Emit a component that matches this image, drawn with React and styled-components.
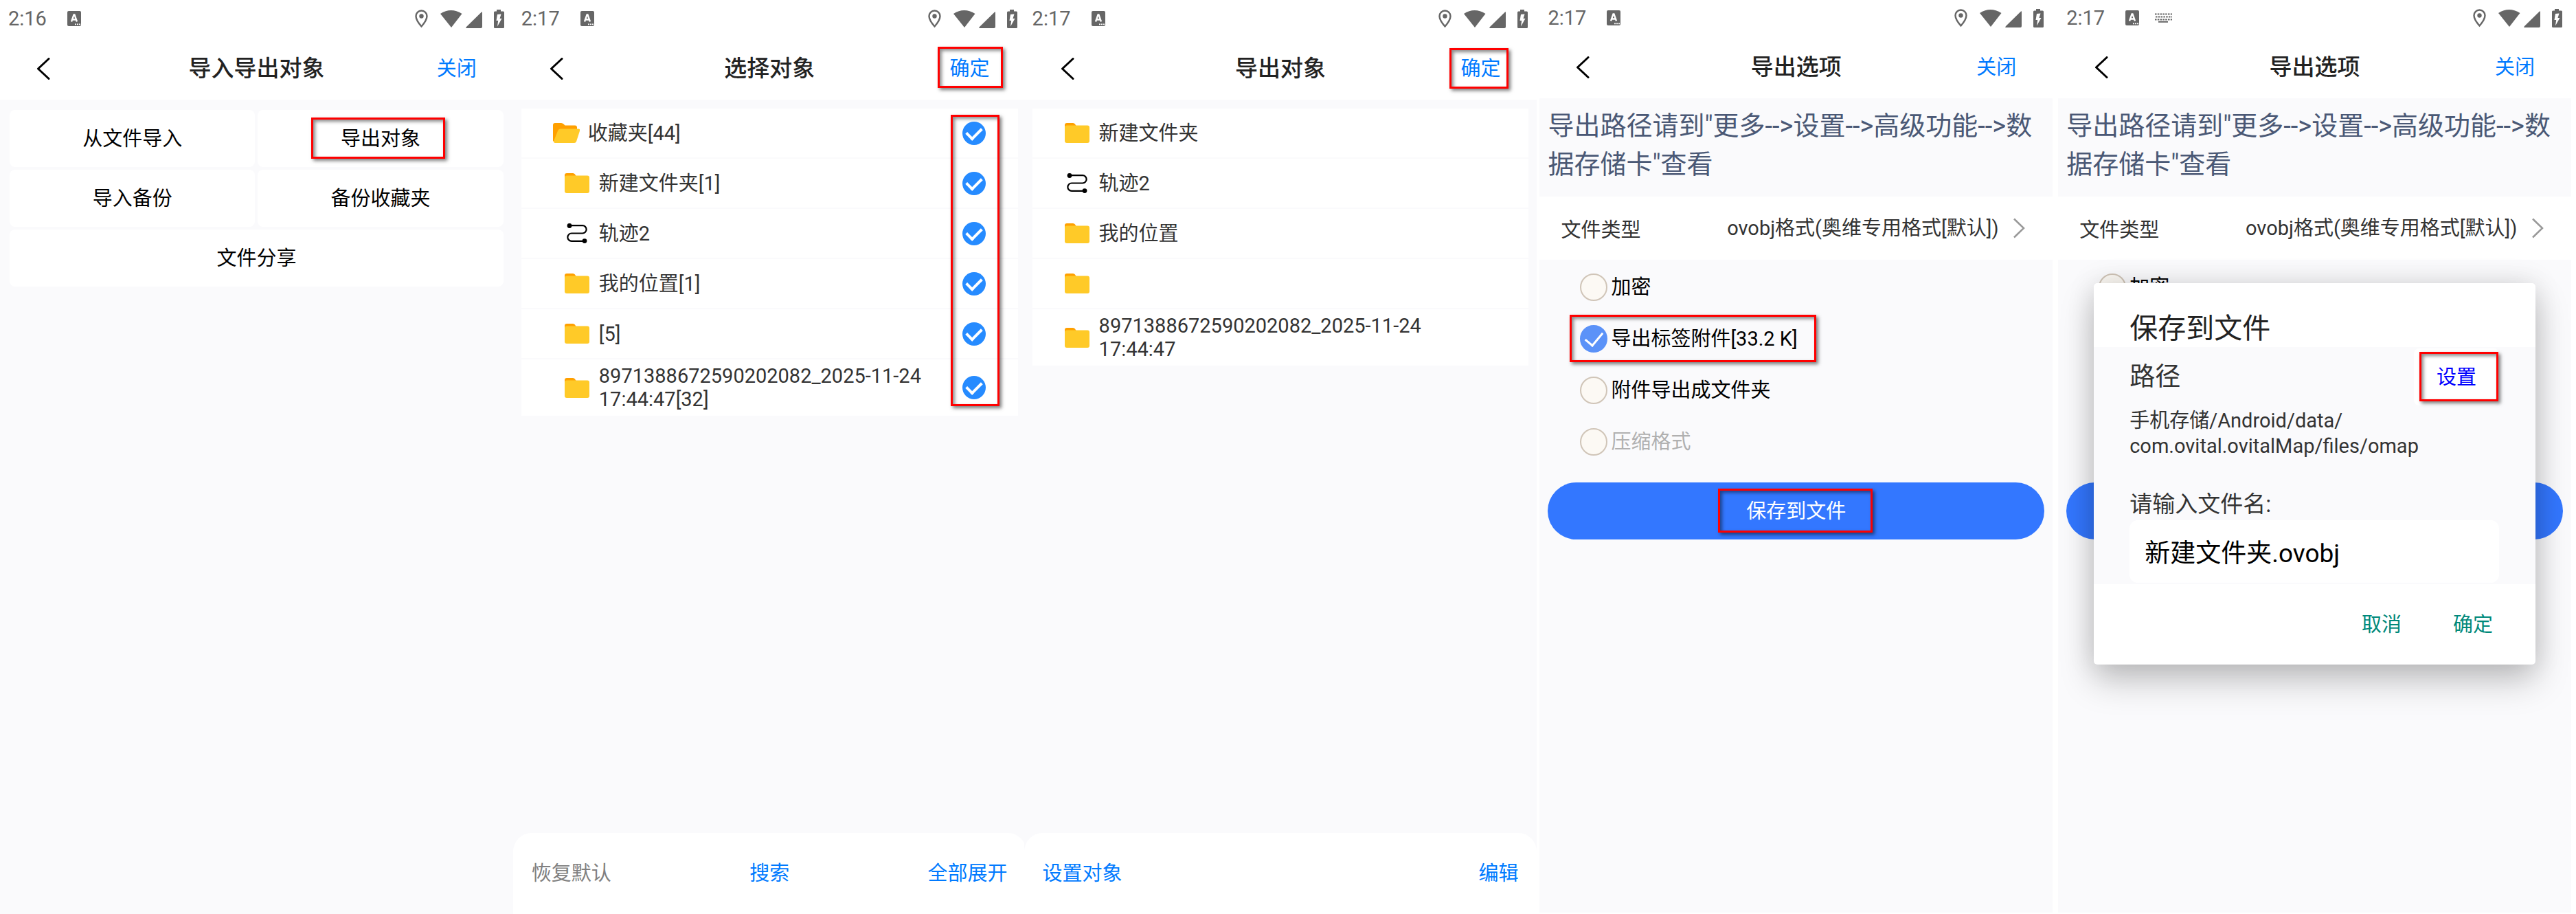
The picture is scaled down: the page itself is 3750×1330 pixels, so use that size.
import React, { useState } from 'react'
import styled, { createGlobalStyle } from 'styled-components'

const GlobalStyle = createGlobalStyle`
  * {
    box-sizing: border-box;
  }
  body {
    margin: 0;
    background: #fff;
    font-family: Roboto, 'Noto Sans CJK SC', sans-serif;
    font-size: 29px;
    color: #333;
  }
  button,
  input,
  select {
    font: inherit;
    color: inherit;
  }
  button {
    border: none;
    padding: 0;
    background: none;
    cursor: pointer;
  }
`

const BadgeIcon = () => (
  <svg width='20' height='22' viewBox='0 0 20 22'>
    <rect width='20' height='22' rx='2' fill='#666' />
    <path d='M6 15.500L9.500 5.500h1l3.500 10M7.500 12.500h5' fill='none' stroke='#fff' strokeWidth='2.300' />
    <path d='M11 19.300h2M14 19.300h2M17 19.300h2' stroke='#fff' strokeWidth='1.800' />
  </svg>
)

const KeyboardIcon = () => (
  <svg width='26' height='14' viewBox='0 0 26 14'>
    <path
      d='M0 1.500h25M1 5.500h24M0 9.500h25'
      stroke='#666'
      strokeWidth='2'
      strokeDasharray='2.500 1.300'
    />
    <path d='M5 12.800h14' stroke='#666' strokeWidth='2' />
  </svg>
)

const PinIcon = () => (
  <svg width='19' height='27' viewBox='0 0 19 27'>
    <path
      d='M9.500 1.500a8 8 0 0 0-8 8c0 5.800 8 15 8 15s8-9.200 8-15a8 8 0 0 0-8-8z'
      fill='none'
      stroke='#666'
      strokeWidth='2.400'
    />
    <circle cx='9.500' cy='9.500' r='3.200' fill='#666' />
  </svg>
)

const SignalIcons = () => (
  <svg width='93' height='27' viewBox='0 0 93 27'>
    <path d='M0 6Q15.500-4 31.500 6L16 26z' fill='#666' />
    <path d='M61 4.500q0-2-1.500-.500L38 25q-1.500 2 0 2h21q2 0 2-2z' fill='#666' />
    <path
      d='M82 0h6v2.500h3.500q1.500 0 1.500 1.500v21.500q0 1.500-1.500 1.500h-12q-1.500 0-1.500-1.500V4q0-1.500 1.500-1.500H82z'
      fill='#666'
    />
    <path d='M83 7l5.500-.500-2 6.500h3l-6.500 11.500 1.200-8.500H81.500z' fill='#fff' />
  </svg>
)

const BackIcon = () => (
  <svg width='20' height='32' viewBox='0 0 20 32'>
    <path d='M18 1.500L2.500 16 18 30.500' fill='none' stroke='#000' strokeWidth='3' strokeLinecap='round' strokeLinejoin='round' />
  </svg>
)

const MoreIcon = () => (
  <svg width='18' height='30' viewBox='0 0 18 30'>
    <path d='M2 1.500L16 15 2 28.500' fill='none' stroke='#999' strokeWidth='2.500' />
  </svg>
)

const FolderIcon = () => (
  <svg width='36' height='29' viewBox='0 0 36 29'>
    <path d='M0 10V3q0-3 3-3h9q2 0 3 1.500L17 5v5z' fill='#ffa000' />
    <rect y='3.500' width='36' height='25.500' rx='3' fill='#ffca28' />
  </svg>
)

const OpenFolderIcon = () => (
  <svg width='39' height='29' viewBox='0 0 39 29'>
    <path d='M0 26V3q0-3 3-3h9q2 0 3.500 1.500l2 2H32q3 0 3 3V12L10 27H3q-3 0-3-1z' fill='#ffa000' />
    <path d='M11 8.500h26q3 0 2 3L34 27q-.800 2-3 2H3q-2.500 0-1.800-3L7 11.500q1-3 4-3z' fill='#ffca28' />
  </svg>
)

const TrackIcon = () => (
  <svg width='30' height='29' viewBox='0 0 30 29'>
    <path d='M4 3.200h19a5.600 5.600 0 0 1 0 11.300H7a5.600 5.600 0 0 0 0 11.300h19' fill='none' stroke='#000' strokeWidth='2.200' />
    <circle cx='4' cy='3.500' r='3.400' fill='#000' />
    <circle cx='26' cy='25.600' r='3.400' fill='#000' />
  </svg>
)

const icons = { folder: FolderIcon, open: OpenFolderIcon, track: TrackIcon }

const PhoneTop = ({ time, title, action, marked, raised, keyboard }) => (
  <>
    <StatusBar $raised={raised}>
      <time>{time}</time>
      <BadgeIcon />
      {keyboard && <KeyboardIcon />}
      <StatusRight>
        <PinIcon />
        <SignalIcons />
      </StatusRight>
    </StatusBar>
    <Header>
      <BackButton aria-label='返回'>
        <BackIcon />
      </BackButton>
      <h1>{title}</h1>
      <HeaderAction>
        {action}
        {marked && <Mark $inset={marked} />}
      </HeaderAction>
    </Header>
  </>
)

const ImportExportScreen = () => (
  <Phone>
    <PhoneTop time='2:16' title='导入导出对象' action='关闭' />
    <MenuGrid>
      <MenuButton>从文件导入</MenuButton>
      <MenuButton>
        <Marked>
          导出对象
          <Mark $inset='-16px -36px -14px -43px' />
        </Marked>
      </MenuButton>
      <MenuButton>导入备份</MenuButton>
      <MenuButton>备份收藏夹</MenuButton>
      <MenuButton $wide>文件分享</MenuButton>
    </MenuGrid>
  </Phone>
)

const selectItems = [
  { icon: 'open', name: '收藏夹[44]' },
  { icon: 'folder', name: '新建文件夹[1]', child: true },
  { icon: 'track', name: '轨迹2', child: true },
  { icon: 'folder', name: '我的位置[1]', child: true },
  { icon: 'folder', name: '[5]', child: true },
  { icon: 'folder', name: '8971388672590202082_2025-11-24 17:44:47[32]', child: true },
]

const SelectScreen = () => (
  <Phone>
    <PhoneTop time='2:17' title='选择对象' action='确定' marked='-15px -19px -11px -18px' />
    <List>
      {selectItems.map((item, i) => {
        const Icon = icons[item.icon]
        return (
          <Row key={item.name} $child={item.child}>
            <IconSlot>
              <Icon />
            </IconSlot>
            <RowName htmlFor={`select-${i}`}>{item.name}</RowName>
            <RoundCheck id={`select-${i}`} type='checkbox' defaultChecked />
          </Row>
        )
      })}
      <Mark $inset='9px 27px 14px auto' $width='71px' />
    </List>
    <Footer>
      <FooterButton $muted>恢复默认</FooterButton>
      <FooterButton>搜索</FooterButton>
      <FooterButton>全部展开</FooterButton>
    </Footer>
  </Phone>
)

const exportItems = [
  { icon: 'folder', name: '新建文件夹' },
  { icon: 'track', name: '轨迹2' },
  { icon: 'folder', name: '我的位置' },
  { icon: 'folder', name: '' },
  { icon: 'folder', name: '8971388672590202082_2025-11-24 17:44:47' },
]

const ExportScreen = () => (
  <Phone $overlap>
    <PhoneTop time='2:17' title='导出对象' action='确定' marked='-13px -12px -12px -16px' />
    <List>
      {exportItems.map((item) => {
        const Icon = icons[item.icon]
        return (
          <Row key={item.name}>
            <IconSlot>
              <Icon />
            </IconSlot>
            <RowText>{item.name}</RowText>
          </Row>
        )
      })}
    </List>
    <Footer>
      <FooterButton>设置对象</FooterButton>
      <FooterButton>编辑</FooterButton>
    </Footer>
  </Phone>
)

const OptionsScreen = ({ id, gap, keyboard, marked, children }) => (
  <Phone $gap={gap} $raised>
    <PhoneTop time='2:17' title='导出选项' action='关闭' raised keyboard={keyboard} />
    <Hint>导出路径请到"更多--&gt;设置--&gt;高级功能--&gt;数据存储卡"查看</Hint>
    <TypeRow>
      <label htmlFor={`${id}-type`}>文件类型</label>
      <TypeSelect id={`${id}-type`}>
        <option>ovobj格式(奥维专用格式[默认])</option>
      </TypeSelect>
      <MoreIcon />
    </TypeRow>
    <Options>
      <Option>
        <OptionCheck type='checkbox' />
        加密
      </Option>
      <Option>
        <OptionCheck type='checkbox' defaultChecked />
        导出标签附件[33.2 K]
        {marked && <Mark $inset='2px -27px 3px -15px' />}
      </Option>
      <Option>
        <OptionCheck type='checkbox' />
        附件导出成文件夹
      </Option>
      <Option $disabled>
        <OptionCheck type='checkbox' disabled />
        压缩格式
      </Option>
    </Options>
    <SaveButton>
      <Marked>
        保存到文件
        {marked && <Mark $inset='-18px -39px -16px -41px' />}
      </Marked>
    </SaveButton>
    {children}
  </Phone>
)

const SaveDialog = () => {
  const [fileName, setFileName] = useState('新建文件夹.ovobj')

  return (
    <Dialog role='dialog' aria-labelledby='save-title'>
      <h2 id='save-title'>保存到文件</h2>
      <DialogBody>
        <PathHead>
          <span>路径</span>
          <PathButton>
            设置
            <Mark $inset='5px 1px 6px 8px' />
          </PathButton>
        </PathHead>
        <PathText>
          手机存储/Android/data/
          <br />
          com.ovital.ovitalMap/files/omap
        </PathText>
        <NameLabel htmlFor='file-name'>请输入文件名:</NameLabel>
        <NameInput id='file-name' value={fileName} onChange={(e) => setFileName(e.target.value)} />
      </DialogBody>
      <DialogActions>
        <button>取消</button>
        <button>确定</button>
      </DialogActions>
    </Dialog>
  )
}

const App = () => (
  <>
    <GlobalStyle />
    <Page>
      <ImportExportScreen />
      <SelectScreen />
      <ExportScreen />
      <OptionsScreen id='options' gap='4px' marked />
      <OptionsScreen id='saving' gap='8px' keyboard>
        <SaveDialog />
      </OptionsScreen>
    </Page>
  </>
)

const Page = styled.main`
  display: flex;
  min-height: 100vh;
  padding-right: 7px;
  overflow: hidden;
`
const Phone = styled.section`
  position: relative;
  display: flex;
  flex-direction: column;
  flex: 1 1 0;
  min-width: 0;
  background: #fafafc;
  margin-left: ${({ $gap, $overlap }) => ($overlap ? '-3px' : $gap || 0)};
  margin-bottom: ${({ $raised }) => ($raised ? '2px' : 0)};
`
const Mark = styled.span`
  position: absolute;
  inset: ${({ $inset }) => $inset};
  width: ${({ $width }) => $width || 'auto'};
  border: 3px solid #f00;
  box-shadow: 3px 3px 5px rgba(0, 0, 0, 0.5), inset 3px 3px 5px rgba(0, 0, 0, 0.45);
  pointer-events: none;
`
const Marked = styled.span`
  position: relative;
  display: inline-block;
  line-height: 30px;
`
const StatusBar = styled.div`
  display: flex;
  align-items: center;
  height: ${({ $raised }) => ($raised ? '52px' : '54px')};
  padding: 0 13px 0 12px;
  background: #fff;
  color: #666;
  time {
    width: 86px;
  }
  svg {
    flex: none;
  }
  svg + svg {
    margin-left: 23px;
  }
`
const StatusRight = styled.div`
  display: flex;
  margin-left: auto;
  && svg + svg {
    margin-left: 18px;
  }
`
const Header = styled.header`
  display: grid;
  grid-template-columns: 1fr auto 1fr;
  align-items: center;
  height: 91px;
  padding: 0 53px;
  background: #fff;
  h1 {
    margin: 0;
    font-size: 33px;
    font-weight: 500;
    line-height: 40px;
    color: #222;
  }
`
const BackButton = styled.button`
  display: flex;
  justify-self: start;
`
const HeaderAction = styled.button`
  position: relative;
  justify-self: end;
  line-height: 34px;
  color: #007aff;
`
const MenuGrid = styled.nav`
  display: grid;
  grid-template-columns: 1fr 1fr;
  gap: 4px;
  padding: 15px 14px;
`
const MenuButton = styled.button`
  height: 83px;
  border-radius: 8px;
  background: #fff;
  color: #000;
  line-height: 30px;
  grid-column: ${({ $wide }) => ($wide ? 'span 2' : 'auto')};
`
const List = styled.div`
  position: relative;
  display: flex;
  flex-direction: column;
  gap: 2px;
  margin: 13px 12px 0;
`
const Row = styled.div`
  display: flex;
  align-items: center;
  min-height: 71px;
  padding: 7px 47px 7px ${({ $child }) => ($child ? '62px' : '46px')};
  background: #fff;
  line-height: 34px;
`
const IconSlot = styled.span`
  display: flex;
  justify-content: center;
  flex: none;
  width: 39px;
  margin-right: 12px;
`
const RowName = styled.label`
  flex: 1;
  padding-right: 56px;
`
const RowText = styled.span`
  flex: 0 1 500px;
`
const RoundCheck = styled.input`
  appearance: none;
  flex: none;
  width: 34px;
  height: 34px;
  margin: 0;
  border-radius: 50%;
  background: #268bff;
  display: grid;
  place-items: center;
  &::before {
    content: '';
    width: 10px;
    height: 18px;
    margin: -4px 0 0 1px;
    border: solid #fff;
    border-width: 0 4px 4px 0;
    transform: rotate(45deg);
  }
`
const Footer = styled.footer`
  display: flex;
  justify-content: space-between;
  align-items: center;
  height: 118px;
  margin-top: auto;
  padding: 0 27px;
  border-radius: 27px 27px 0 0;
  background: #fff;
`
const FooterButton = styled.button`
  line-height: 30px;
  color: ${({ $muted }) => ($muted ? '#808080' : '#007aff')};
`
const Hint = styled.p`
  margin: 0;
  height: 143px;
  padding: 12px 12px;
  font-size: 38px;
  line-height: 56px;
  color: #4a5875;
`
const TypeRow = styled.div`
  display: flex;
  align-items: center;
  height: 92px;
  padding: 0 40px 0 31px;
  background: #fff;
`
const TypeSelect = styled.select`
  appearance: none;
  border: none;
  background: none;
  margin: 0 20px 0 auto;
  padding: 0;
  line-height: 40px;
`
const Options = styled.div`
  display: flex;
  flex-direction: column;
  align-items: flex-start;
  gap: 1px;
  padding: 3px 59px 0;
`
const Option = styled.label`
  position: relative;
  display: flex;
  align-items: center;
  gap: 5px;
  height: 74px;
  line-height: 30px;
  color: ${({ $disabled }) => ($disabled ? '#b0b0b0' : '#000')};
`
const OptionCheck = styled.input`
  appearance: none;
  display: grid;
  place-items: center;
  width: 40px;
  height: 40px;
  margin: 0;
  border: 2px solid #d0c5b8;
  border-radius: 50%;
  background: #fcf9f4;
  &:checked {
    border-color: #5b92f8;
    background: #5b92f8;
  }
  &:checked::before {
    content: '';
    width: 12px;
    height: 22px;
    margin: -6px 0 0 0;
    border: solid #fff;
    border-width: 0 3px 3px 0;
    transform: rotate(40deg);
  }
`
const SaveButton = styled.button`
  height: 83px;
  margin: 22px 12px 0;
  border-radius: 42px;
  background: #3377ff;
  color: #fff;
`
const Dialog = styled.div`
  position: absolute;
  top: 412px;
  left: 52px;
  right: 52px;
  border-radius: 5px;
  background: #fff;
  box-shadow: 0 24px 50px rgba(0, 0, 0, 0.22), 0 0 40px rgba(0, 0, 0, 0.12);
  h2 {
    margin: 0;
    padding: 38px 52px 0;
    height: 93px;
    font-size: 41px;
    font-weight: 400;
    line-height: 56px;
    color: #222;
  }
`
const DialogBody = styled.div`
  display: flex;
  flex-direction: column;
  padding: 2px 53px 2px 52px;
  background: #fafafc;
`
const PathHead = styled.div`
  display: flex;
  justify-content: space-between;
  align-items: center;
  font-size: 37px;
  line-height: 38px;
`
const PathButton = styled.button`
  position: relative;
  width: 124px;
  height: 83px;
  padding: 0 0 0 33px;
  border-radius: 8px;
  background: #fff;
  font-size: 29px;
  line-height: 30px;
  text-align: left;
  color: #00f;
`
const PathText = styled.p`
  margin: 4px 0 0;
  line-height: 37px;
`
const NameLabel = styled.label`
  margin-top: 43px;
  font-size: 33px;
  line-height: 46px;
`
const NameInput = styled.input`
  width: 100%;
  height: 91px;
  padding: 0 22px 2px;
  border: none;
  border-radius: 12px;
  background: #fff;
  font-size: 37px;
  color: #000;
`
const DialogActions = styled.div`
  display: flex;
  justify-content: flex-end;
  gap: 75px;
  height: 117px;
  padding: 0 62px;
  line-height: 30px;
  color: #00897b;
`
export default App
